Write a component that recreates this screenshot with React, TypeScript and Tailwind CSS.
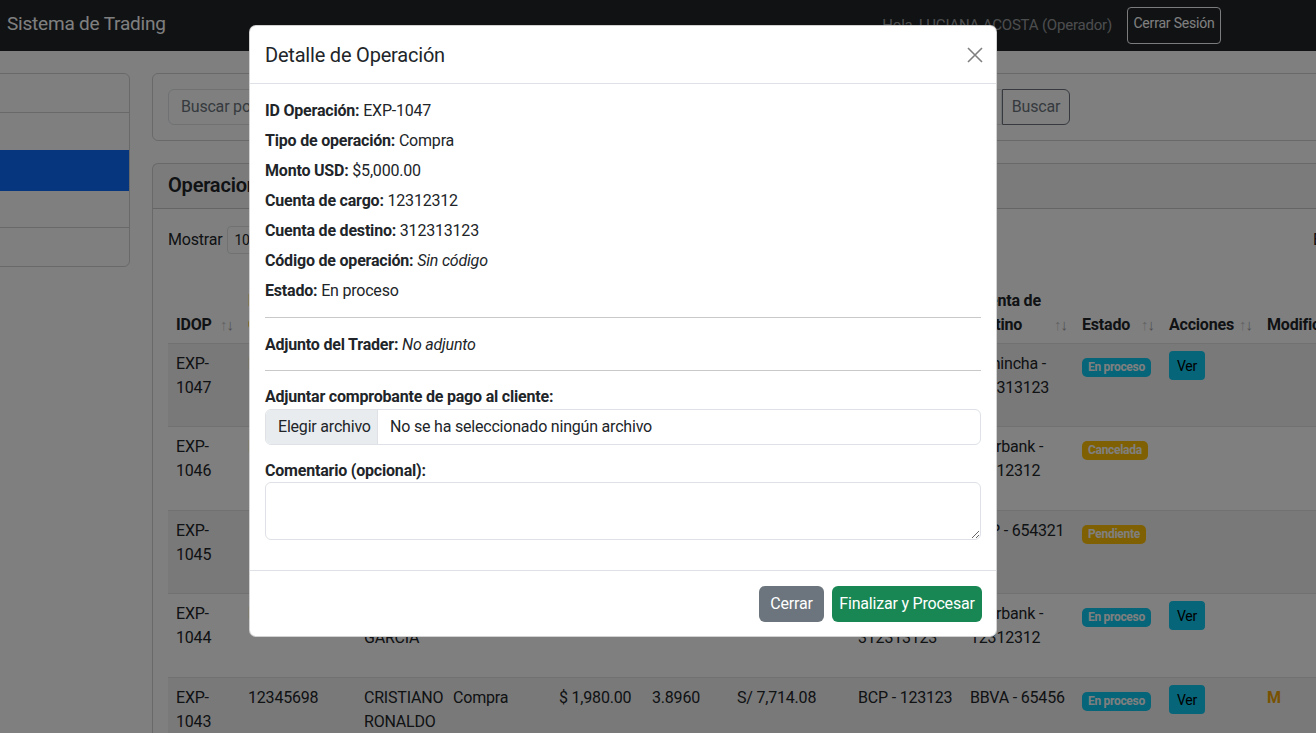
import React from "react";

const COLS =
  "grid grid-cols-[72px_116px_89px_106px_93px_85px_121px_112px_112px_87px_98px_120px]";

type Badge = { label: string; kind: "info" | "warning" };
type Row = {
  id: [string, string];
  c2: React.ReactNode;
  name: React.ReactNode;
  tipo: string;
  usd: string;
  tc: string;
  pen: string;
  cargo: React.ReactNode;
  destino: React.ReactNode;
  badge: Badge;
  ver: boolean;
  mod?: string;
  h: string;
  striped: boolean;
};

const rows: Row[] = [
  {
    id: ["EXP-", "1047"],
    c2: <span className="text-[#fd7e14]">Pendiente</span>,
    name: <>LUCIANA<br />ACOSTA</>,
    tipo: "Compra",
    usd: "$ 5,000.00",
    tc: "3.8950",
    pen: "S/ 19,475.00",
    cargo: <>BCP -<br />12312312</>,
    destino: <>Pichincha -<br />312313123</>,
    badge: { label: "En proceso", kind: "info" },
    ver: true,
    h: "h-[83px]",
    striped: true,
  },
  {
    id: ["EXP-", "1046"],
    c2: <span className="text-[#fd7e14]">Pendiente</span>,
    name: <>MARIA<br />LOPEZ</>,
    tipo: "Venta",
    usd: "$ 2,500.00",
    tc: "3.8900",
    pen: "S/ 9,725.00",
    cargo: <>BBVA -<br />65456</>,
    destino: <>Interbank -<br />12312312</>,
    badge: { label: "Cancelada", kind: "warning" },
    ver: false,
    h: "h-[84px]",
    striped: false,
  },
  {
    id: ["EXP-", "1045"],
    c2: "12345678",
    name: <>JUAN<br />PEREZ</>,
    tipo: "Compra",
    usd: "$ 1,200.00",
    tc: "3.8920",
    pen: "S/ 4,670.40",
    cargo: <>BCP -<br />123123</>,
    destino: <>BCP - 654321</>,
    badge: { label: "Pendiente", kind: "warning" },
    ver: false,
    h: "h-[83px]",
    striped: true,
  },
  {
    id: ["EXP-", "1044"],
    c2: <span className="text-[#fd7e14]">Pendiente</span>,
    name: <>CARLOS<br />GARCIA</>,
    tipo: "Compra",
    usd: "$ 3,000.00",
    tc: "3.8940",
    pen: "S/ 11,682.00",
    cargo: <>BCP -<br />312313123</>,
    destino: <>Interbank -<br />12312312</>,
    badge: { label: "En proceso", kind: "info" },
    ver: true,
    h: "h-[84px]",
    striped: false,
  },
  {
    id: ["EXP-", "1043"],
    c2: "12345698",
    name: <>CRISTIANO<br />RONALDO</>,
    tipo: "Compra",
    usd: "$ 1,980.00",
    tc: "3.8960",
    pen: "S/ 7,714.08",
    cargo: <>BCP - 123123</>,
    destino: <>BBVA - 65456</>,
    badge: { label: "En proceso", kind: "info" },
    ver: true,
    mod: "M",
    h: "h-[84px]",
    striped: true,
  },
];

function Arrows() {
  return (
    <span className="absolute bottom-[6px] right-[7px] text-[15px] leading-6 tracking-[-1px] text-[#212529]">
      <span className="opacity-[0.25]">↑</span>
      <span className="opacity-[0.45]">↓</span>
    </span>
  );
}

function Th({ children, className = "" }: { children: React.ReactNode; className?: string }) {
  return (
    <div className={`relative flex items-end px-2 pb-[6px] pr-[26px] font-bold leading-6 ${className}`}>
      <span>{children}</span>
      <Arrows />
    </div>
  );
}

function Td({ children, className = "" }: { children: React.ReactNode; className?: string }) {
  return <div className={`whitespace-nowrap px-2 pt-2 leading-6 ${className}`}>{children}</div>;
}

function Field({ label, children, mb = true }: { label: string; children: React.ReactNode; mb?: boolean }) {
  return (
    <p className={`leading-6 ${mb ? "mb-[6px]" : ""}`}>
      <strong className="font-bold">{label}</strong> {children}
    </p>
  );
}

export default function App() {
  return (
    <div className="relative h-[733px] w-[1316px] overflow-hidden bg-white font-['Segoe_UI',Roboto,Arial,sans-serif] text-[16px] tracking-[-0.2px] text-[#212529]">
      {/* Navbar */}
      <nav className="flex h-[51px] items-center bg-[#212529] pl-[7px] pr-[95px]">
        <span className="pb-[2px] text-[19px] text-white">Sistema de Trading</span>
        <div className="ml-auto flex items-center">
          <span className="text-[15px] text-[rgba(255,255,255,0.55)]">Hola, LUCIANA ACOSTA (Operador)</span>
          <button className="ml-[15px] flex h-[37px] w-[94px] items-start justify-center rounded-[4px] border border-[#f8f9fa] pt-[5px] text-[14px] leading-5 text-white">
            Cerrar Sesión
          </button>
        </div>
      </nav>

      {/* Page */}
      <div className="-ml-[20px] flex gap-[22px] pt-[22px]">
        {/* Sidebar */}
        <div className="w-[150px] shrink-0">
          <div className="overflow-hidden rounded-[6px] border border-[rgba(0,0,0,0.175)]">
            <div className="h-[39px] border-b border-[rgba(0,0,0,0.175)]" />
            <div className="h-[38px] border-b border-[#0d6efd]" />
            <div className="h-[39px] bg-[#0d6efd]" />
            <div className="h-[38px] border-b border-[rgba(0,0,0,0.175)] border-t border-t-[#0d6efd]" />
            <div className="h-[38px]" />
          </div>
        </div>

        {/* Main */}
        <div className="w-[1260px] shrink-0">
          {/* Search card */}
          <div className="rounded-[6px] border border-[rgba(0,0,0,0.175)] px-[15px] py-[15px]">
            <div className="flex">
              <div className="flex h-[36px] w-[834px] items-center rounded-l-[6px] border border-[#dee2e6] px-[12px] text-[#6c757d]">
                Buscar por IDOP, DNI o nombre del cliente
              </div>
              <button className="h-[36px] w-[68px] rounded-r-[6px] border border-[#6c757d] text-[#6c757d]">
                Buscar
              </button>
            </div>
          </div>

          {/* Operations card */}
          <div className="mt-[22px] rounded-[6px] border border-[rgba(0,0,0,0.175)]">
            <div className="flex h-[45px] items-center border-b border-[rgba(0,0,0,0.175)] bg-[rgba(0,0,0,0.03)] px-[15px] pb-[2px]">
              <span className="text-[20px] font-semibold">Operaciones en Proceso</span>
            </div>
            <div className="px-[15px] pt-[17px]">
              <div className="flex h-[28px] items-center">
                <div className="flex w-[1145px] items-center">
                  <span>Mostrar</span>
                  <span className="ml-[5px] flex h-[28px] w-[62px] items-center justify-between rounded-[4px] border border-[#dee2e6] px-[6px] text-[14px]">
                    10
                    <svg width="10" height="10" viewBox="0 0 16 16" fill="none" stroke="#343a40" strokeWidth="2">
                      <path d="M2 5l6 6 6-6" />
                    </svg>
                  </span>
                  <span className="ml-[8px]">registros</span>
                </div>
                <span>Buscar:</span>
              </div>

              {/* Table */}
              <div className="mt-[27px] w-[1211px]">
                <div className={`${COLS} h-[63px] border-b border-[#dee2e6]`}>
                  <Th>IDOP</Th>
                  <Th className="text-[#fd7e14]">DNI / RUC Cliente</Th>
                  <Th>Cliente</Th>
                  <Th>Tipo</Th>
                  <Th>Monto USD</Th>
                  <Th>T.C.</Th>
                  <Th>Monto PEN</Th>
                  <Th>Cuenta de cargo</Th>
                  <Th>Cuenta de destino</Th>
                  <Th>Estado</Th>
                  <Th>Acciones</Th>
                  <div className="flex items-end px-2 pb-[6px] font-bold leading-6">Modificado</div>
                </div>
                {rows.map((r) => (
                  <div
                    key={r.id[1]}
                    className={`${COLS} ${r.h} border-b border-[#dee2e6] ${r.striped ? "bg-[rgba(0,0,0,0.05)]" : ""}`}
                  >
                    <Td>
                      {r.id[0]}
                      <br />
                      {r.id[1]}
                    </Td>
                    <Td>{r.c2}</Td>
                    <Td>{r.name}</Td>
                    <Td>{r.tipo}</Td>
                    <Td>{r.usd}</Td>
                    <Td>{r.tc}</Td>
                    <Td>{r.pen}</Td>
                    <Td>{r.cargo}</Td>
                    <Td>{r.destino}</Td>
                    <div className="px-2 pt-[10px]">
                      <span
                        className={`inline-flex h-[19px] items-center whitespace-nowrap rounded-[5px] px-[6px] text-[12px] font-bold leading-none tracking-[-0.3px] text-white ${
                          r.badge.kind === "info" ? "bg-[#0dcaf0]" : "bg-[#ffc107]"
                        }`}
                      >
                        {r.badge.label}
                      </span>
                    </div>
                    <div className="px-2 pt-[7px]">
                      {r.ver && (
                        <span className="flex h-[29px] w-[36px] items-center justify-center rounded-[4px] bg-[#0dcaf0] pt-[2px] text-[14px] text-black">
                          Ver
                        </span>
                      )}
                    </div>
                    <Td className="font-bold text-[#f0a500]">{r.mod ?? ""}</Td>
                  </div>
                ))}
              </div>
            </div>
          </div>
        </div>
      </div>

      {/* Backdrop */}
      <div className="absolute inset-0 bg-black/50" />

      {/* Modal */}
      <div className="absolute left-[249px] top-[25px] w-[748px] rounded-[7px] border border-[rgba(0,0,0,0.175)] bg-white">
        <div className="flex h-[58px] items-center justify-between border-b border-[#dee2e6] pl-[15px] pr-[13px]">
          <h5 className="text-[20px] font-normal leading-[1.5]">Detalle de Operación</h5>
          <svg width="16" height="16" viewBox="0 0 16 16" stroke="#808080" strokeWidth="1.6" className="mt-[1px]">
            <path d="M1 1l14 14M15 1L1 15" />
          </svg>
        </div>

        <div className="h-[486px] px-[15px] pt-[15px]">
          <Field label="ID Operación:">EXP-1047</Field>
          <Field label="Tipo de operación:">Compra</Field>
          <Field label="Monto USD:">$5,000.00</Field>
          <Field label="Cuenta de cargo:">12312312</Field>
          <Field label="Cuenta de destino:">312313123</Field>
          <Field label="Código de operación:">
            <em>Sin código</em>
          </Field>
          <Field label="Estado:" mb={false}>
            En proceso
          </Field>
          <div className="mt-[14px] h-px bg-[#c8c9ca]" />
          <p className="mt-[15px] leading-6">
            <strong className="font-bold">Adjunto del Trader:</strong> <em>No adjunto</em>
          </p>
          <div className="mt-[13px] h-px bg-[#c8c9ca]" />
          <div className="mt-[14px] font-bold leading-6">Adjuntar comprobante de pago al cliente:</div>
          <div className="flex h-[36px] overflow-hidden rounded-[6px] border border-[#dee2e6]">
            <div className="flex w-[112px] items-center border-r border-[#dee2e6] bg-[#e9ecef] pl-[12px]">
              Elegir archivo
            </div>
            <div className="flex items-center pl-[12px]">No se ha seleccionado ningún archivo</div>
          </div>
          <div className="mt-[14px] font-bold leading-6">Comentario (opcional):</div>
          <textarea
            className="-mt-px block h-[58px] w-full resize-y rounded-[6px] border border-[#dee2e6] outline-none"
            defaultValue=""
          />
        </div>

        <div className="flex h-[66px] items-start justify-end gap-[8px] border-t border-[#dee2e6] pr-[14px] pt-[15px]">
          <button className="h-[36px] w-[65px] rounded-[6px] bg-[#6c757d] text-white">Cerrar</button>
          <button className="h-[36px] w-[150px] rounded-[6px] bg-[#198754] text-white">Finalizar y Procesar</button>
        </div>
      </div>
    </div>
  );
}
